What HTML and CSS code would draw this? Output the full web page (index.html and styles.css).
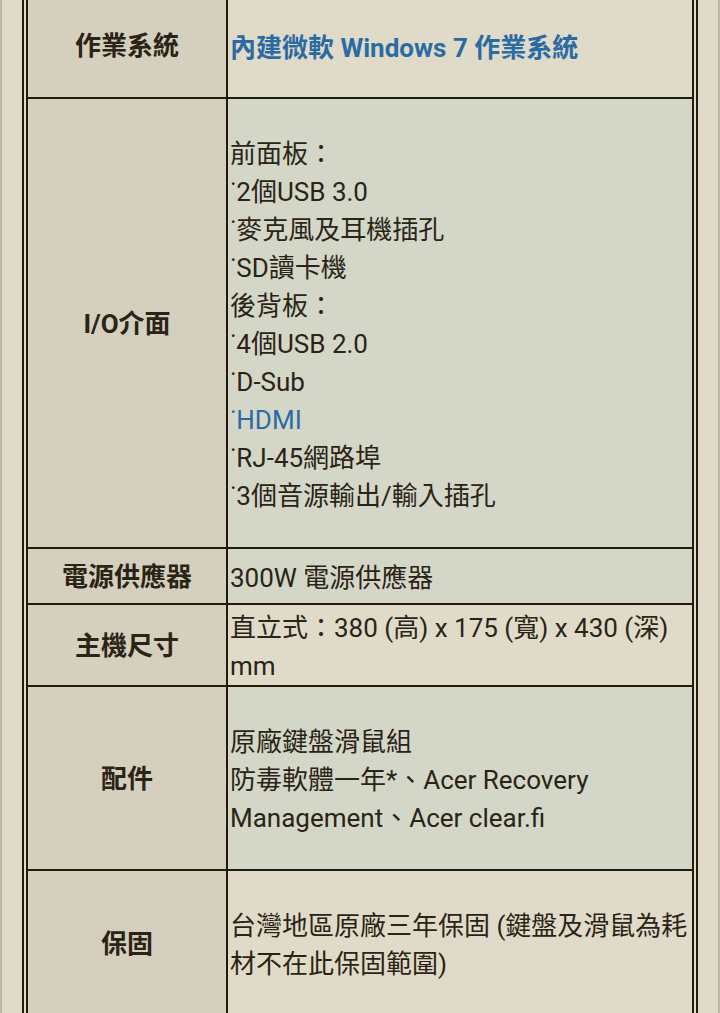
FILE: index.html
```html
<!DOCTYPE html>
<html lang="zh-Hant">
<head>
<meta charset="utf-8">
<title>規格</title>
<link rel="stylesheet" href="styles.css">
</head>
<body>
<div class="frame">
  <div class="spec-wrap">
    <table class="spec">
      <tr class="row-os">
        <th class="label">作業系統</th>
        <td class="value beige pad-os"><a class="link strong" href="#">內建微軟 Windows 7 作業系統</a></td>
      </tr>
      <tr>
        <th class="label">I/O介面</th>
        <td class="value green pad-lg">前面板：<br>˙2個USB 3.0<br>˙麥克風及耳機插孔<br>˙SD讀卡機<br>後背板：<br>˙4個USB 2.0<br>˙D-Sub<br><a class="link" href="#">˙HDMI</a><br>˙RJ-45網路埠<br>˙3個音源輸出/輸入插孔</td>
      </tr>
      <tr>
        <th class="label">電源供應器</th>
        <td class="value green pad-sm">300W 電源供應器</td>
      </tr>
      <tr>
        <th class="label">主機尺寸</th>
        <td class="value beige pad-xs">直立式：380 (高) x 175 (寬) x 430 (深) mm</td>
      </tr>
      <tr>
        <th class="label">配件</th>
        <td class="value green pad-lg">原廠鍵盤滑鼠組<br>防毒軟體一年*、Acer Recovery Management、Acer clear.fi</td>
      </tr>
      <tr>
        <th class="label">保固</th>
        <td class="value beige pad-last">台灣地區原廠三年保固 (鍵盤及滑鼠為耗材不在此保固範圍)</td>
      </tr>
    </table>
  </div>
</div>
</body>
</html>
```

FILE: styles.css
```css
html, body {
  margin: 0;
  padding: 0;
  background: #e0dbc8;
  height: 100%;
  overflow: hidden;
}

.frame {
  width: 720px;
  height: 1013px;
  box-sizing: border-box;
  border-left: 2px solid #bcb8a8;
  border-right: 2px solid #bcb8a8;
  padding: 0 20px;
  background: #e0dbc8;
  overflow: hidden;
}

.spec-wrap {
  border: 2px solid #211b0e;
  border-top: none;
  padding: 0 2px 2px 2px;
  margin-top: -7px;
}

.spec {
  width: 100%;
  border-collapse: collapse;
  font-family: Roboto, "Noto Sans CJK TC", "Noto Sans", sans-serif;
  font-size: 26px;
  line-height: 38px;
  color: #2a2416;
}

.spec th,
.spec td {
  border: 2px solid #211b0e;
  vertical-align: middle;
}

.spec tr:first-child th,
.spec tr:first-child td {
  border-top: none;
}

.label {
  width: 200px;
  box-sizing: border-box;
  background: #d5cfbd;
  font-weight: bold;
  text-align: center;
  padding: 3px 2px 1px 2px;
  color: #2a2416;
}

.value {
  text-align: left;
  padding: 2px;
}

.beige { background: #e0dbc8; }
.green { background: #d4d6c8; }

.pad-os { padding-top: 36px; padding-bottom: 30px; }
.pad-lg { padding-top: 36px; padding-bottom: 32px; }
.pad-sm { padding-top: 10px; padding-bottom: 6px; }
.pad-xs { padding-top: 4px; padding-bottom: 0; }
.pad-last { padding-top: 36px; padding-bottom: 60px; vertical-align: top; }

.spec tr:last-child th {
  vertical-align: top;
  padding-top: 54px;
}

.link {
  color: #2b6ba3;
  text-decoration: none;
}

.strong {
  font-weight: bold;
}
```
